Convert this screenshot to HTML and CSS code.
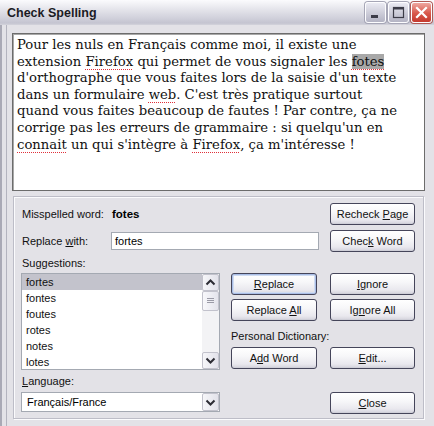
FILE: index.html
```html
<!DOCTYPE html>
<html>
<head>
<meta charset="utf-8">
<link rel="stylesheet" href="styles.css">
</head>
<body>
<div class="window">
  <div class="titlebar">
    <span class="title">Check Spelling</span>
    <div class="caption-btns">
      <span class="cbtn"><svg width="19" height="19" viewBox="0 0 19 19"><rect x="5" y="12" width="7" height="3" fill="#3c3c48"/></svg></span>
      <span class="cbtn"><svg width="19" height="19" viewBox="0 0 19 19"><rect x="4.5" y="4.5" width="10" height="10" fill="none" stroke="#3c3c48" stroke-width="1.2"/><rect x="4" y="4" width="11" height="2.5" fill="#3c3c48"/></svg></span>
      <span class="cbtn close"><svg width="19" height="19" viewBox="0 0 19 19"><path d="M5 5 L14 14 M14 5 L5 14" stroke="#fff" stroke-width="2.2" stroke-linecap="square"/></svg></span>
    </div>
  </div>
  <div class="frame">
    <div class="client">
      <div class="doc">
        Pour les nuls en Français comme moi, il existe une<br>
        extension <span class="miss">Firefox</span> qui permet de vous signaler les <span class="miss sel">fotes</span><br>
        d'orthographe que vous faites lors de la saisie d'un texte<br>
        dans un formulaire <span class="miss">web</span>. C'est très pratique surtout<br>
        quand vous faites beaucoup de fautes ! Par contre, ça ne<br>
        corrige pas les erreurs de grammaire : si quelqu'un en<br>
        <span class="miss">connait</span> un qui s'intègre à <span class="miss">Firefox</span>, ça m'intéresse !
      </div>
      <div class="panel">
        <div class="row">
          <span class="label lbl-w">Misspelled word:</span>
          <span class="word">fotes</span>
          <button class="btn push-right"><span>Recheck <u>P</u>age</span></button>
        </div>
        <div class="row row-2">
          <span class="label lbl-w2">Replace <u>w</u>ith:</span>
          <span class="input">fortes</span>
          <button class="btn push-right"><span>Chec<u>k</u> Word</span></button>
        </div>
        <div class="row row-3">
          <span class="label">Su<u>g</u>gestions:</span>
        </div>
        <div class="row row-4">
          <div class="listbox">
            <ul class="items">
              <li class="selected">fortes</li>
              <li>fontes</li>
              <li>foutes</li>
              <li>rotes</li>
              <li>notes</li>
              <li>lotes</li>
            </ul>
            <div class="scrollbar">
              <span class="sbtn"><svg width="15" height="15" viewBox="0 0 15 15"><path d="M3.5 9.5 L7.5 5.5 L11.5 9.5" fill="none" stroke="#2c2c34" stroke-width="2"/></svg></span>
              <span class="thumb"><svg width="7" height="6" viewBox="0 0 7 6"><path d="M0 0.5H7M0 2.5H7M0 4.5H7" stroke="#9a9aa6" stroke-width="1"/></svg></span>
              <span class="track"></span>
              <span class="sbtn"><svg width="15" height="15" viewBox="0 0 15 15"><path d="M3.5 5.5 L7.5 9.5 L11.5 5.5" fill="none" stroke="#2c2c34" stroke-width="2"/></svg></span>
            </div>
          </div>
          <div class="actions">
            <button class="btn wide default"><span><u>R</u>eplace</span></button>
            <button class="btn"><span><u>I</u>gnore</span></button>
            <button class="btn wide"><span>Replace <u>A</u>ll</span></button>
            <button class="btn"><span>Ig<u>n</u>ore All</span></button>
            <span class="label dict-label">Personal Dictionary:</span>
            <button class="btn wide"><span>A<u>d</u>d Word</span></button>
            <button class="btn"><span><u>E</u>dit...</span></button>
          </div>
        </div>
        <div class="row row-5">
          <span class="label"><u>L</u>anguage:</span>
        </div>
        <div class="row row-6">
          <div class="select">
            <span class="select-text">Français/France</span>
            <span class="sbtn"><svg width="15" height="15" viewBox="0 0 15 15"><path d="M3.5 5.5 L7.5 9.5 L11.5 5.5" fill="none" stroke="#2c2c34" stroke-width="2"/></svg></span>
          </div>
          <button class="btn push-right"><span><u>C</u>lose</span></button>
        </div>
      </div>
    </div>
  </div>
</div>
</body>
</html>
```

FILE: styles.css
```css
* { box-sizing: border-box; }
html, body { margin: 0; padding: 0; }
body {
  width: 434px;
  height: 426px;
  overflow: hidden;
  background: #e3e2e7;
  font-family: "Liberation Sans", Arial, sans-serif;
  font-size: 11px;
  color: #000;
}
.window {
  width: 434px;
  height: 426px;
  display: flex;
  flex-direction: column;
  background: #e3e2e7;
}
.titlebar {
  height: 25px;
  flex: none;
  display: flex;
  align-items: center;
  justify-content: space-between;
  padding: 0 2px 0 7px;
  background: linear-gradient(#fbfbfd 0%, #e6e6ec 35%, #cfcfda 75%, #c4c4d0 92%, #d4d4dc 100%);
}
.title {
  font-family: "Liberation Sans", Arial, sans-serif;
  font-weight: bold;
  font-size: 12.5px;
  color: #1b1b24;
}
.caption-btns {
  display: flex;
  gap: 1px;
  margin-top: -1px;
}
.cbtn {
  width: 21px;
  height: 21px;
  border: 1px solid #fdfdff;
  border-radius: 3px;
  background: linear-gradient(#eaeaf2, #c9c9d6 60%, #b4b4c4);
  box-shadow: 0 0 0 1px #a6a6b6;
  display: flex;
  align-items: center;
  justify-content: center;
  margin-left: 1px;
}
.cbtn.close {
  background: linear-gradient(#eea7a0, #d8574a 55%, #c4392e);
  box-shadow: 0 0 0 1px #b05a55;
}
.frame {
  flex: 1;
  display: flex;
  border-left: 2px solid #a9a9b5;
  padding-left: 4px;
}
.client {
  flex: 1;
  border-left: 1px solid #b3b3be;
  padding: 8px 0 0 5px;
}
.doc {
  width: 413px;
  height: 158px;
  background: #fff;
  border: 1px solid #6c6c6c;
  box-shadow: inset 1px 1px 0 #a8a8a8;
  padding: 3px 0 0 4px;
  font-family: "DejaVu Serif", serif;
  font-size: 13.2px;
  line-height: 16.6px;
  white-space: nowrap;
  color: #111;
}
.miss {
  text-decoration: underline dotted #e0303a;
  text-underline-offset: 3px;
  text-decoration-thickness: 1px;
}
.sel { background: #a8a8a8; }
.panel {
  margin: 5px 0 0 1px;
  width: 411px;
  height: 223px;
  border: 1px solid #bdbdc7;
  box-shadow: inset 1px 1px 0 #fbfbfd, 1px 1px 0 #fbfbfd;
  padding: 6px 8px 4px 7px;
  display: flex;
  flex-direction: column;
}
.row {
  display: flex;
  align-items: center;
}
.row-2 { margin-top: 5px; }
.row-3 { height: 21px; padding-left: 1px; }
.row-4 { height: 97px; align-items: flex-start; }
.row-5 { height: 22px; padding-left: 1px; }
.row-6 { align-items: flex-start; }
.label { color: #111; }
.lbl-w { width: 91px; padding-left: 1px; }
.lbl-w2 { width: 90px; padding-left: 1px; }
.word { font-weight: bold; font-size: 11.5px; }
.push-right { margin-left: auto; }
.input {
  width: 208px;
  height: 18px;
  background: #fff;
  border: 1px solid #a4a9b2;
  padding: 1px 0 0 3px;
  line-height: 15px;
}
.btn {
  width: 85px;
  height: 22px;
  border: 1px solid #45455a;
  border-radius: 3px;
  background: linear-gradient(#ffffff 0%, #f7f7f9 40%, #e9e8ee 80%, #d3d2dc 100%);
  box-shadow: inset 0 -1px 0 #cfcfd8;
  font-family: "Liberation Sans", Arial, sans-serif;
  font-size: 11px;
  color: #111;
  padding: 0;
  display: flex;
  align-items: center;
  justify-content: center;
}
.btn.wide { width: 86px; }
.btn.default {
  box-shadow: inset 0 0 0 1px #a9bde6, inset 0 0 0 2px #d0dcf2;
}
.listbox {
  width: 199px;
  height: 97px;
  background: #fff;
  border: 1px solid #a4a9b2;
  display: flex;
}
.items {
  list-style: none;
  margin: 0;
  padding: 0;
  flex: 1;
}
.items li {
  height: 16px;
  line-height: 16px;
  padding-left: 4px;
  color: #111;
}
.items li.selected { background: #c3c3cc; }
.scrollbar {
  width: 17px;
  display: flex;
  flex-direction: column;
  background: #f3f3f5;
}
.sbtn {
  width: 17px;
  height: 17px;
  flex: none;
  border: 1px solid #c2c2cc;
  border-radius: 2px;
  background: linear-gradient(90deg, #f6f6f9, #e2e2ea);
  display: flex;
  align-items: center;
  justify-content: center;
}
.thumb {
  height: 20px;
  flex: none;
  border: 1px solid #c2c2cc;
  border-radius: 2px;
  background: linear-gradient(90deg, #f8f8fb, #e4e4ec);
  display: flex;
  align-items: center;
  justify-content: center;
}
.track { flex: 1; }
.actions {
  margin-left: 11px;
  display: grid;
  grid-template-columns: 86px 85px;
  grid-template-rows: 22px 22px 18px 22px;
  column-gap: 13px;
  row-gap: 4px;
}
.dict-label {
  grid-column: 1 / 3;
  align-self: center;
  padding-top: 3px;
}
.select {
  width: 199px;
  height: 20px;
  background: #fff;
  border: 1px solid #a4a9b2;
  display: flex;
  align-items: center;
}
.select-text { flex: 1; padding-left: 5px; }
.select .sbtn { height: 18px; }
```
